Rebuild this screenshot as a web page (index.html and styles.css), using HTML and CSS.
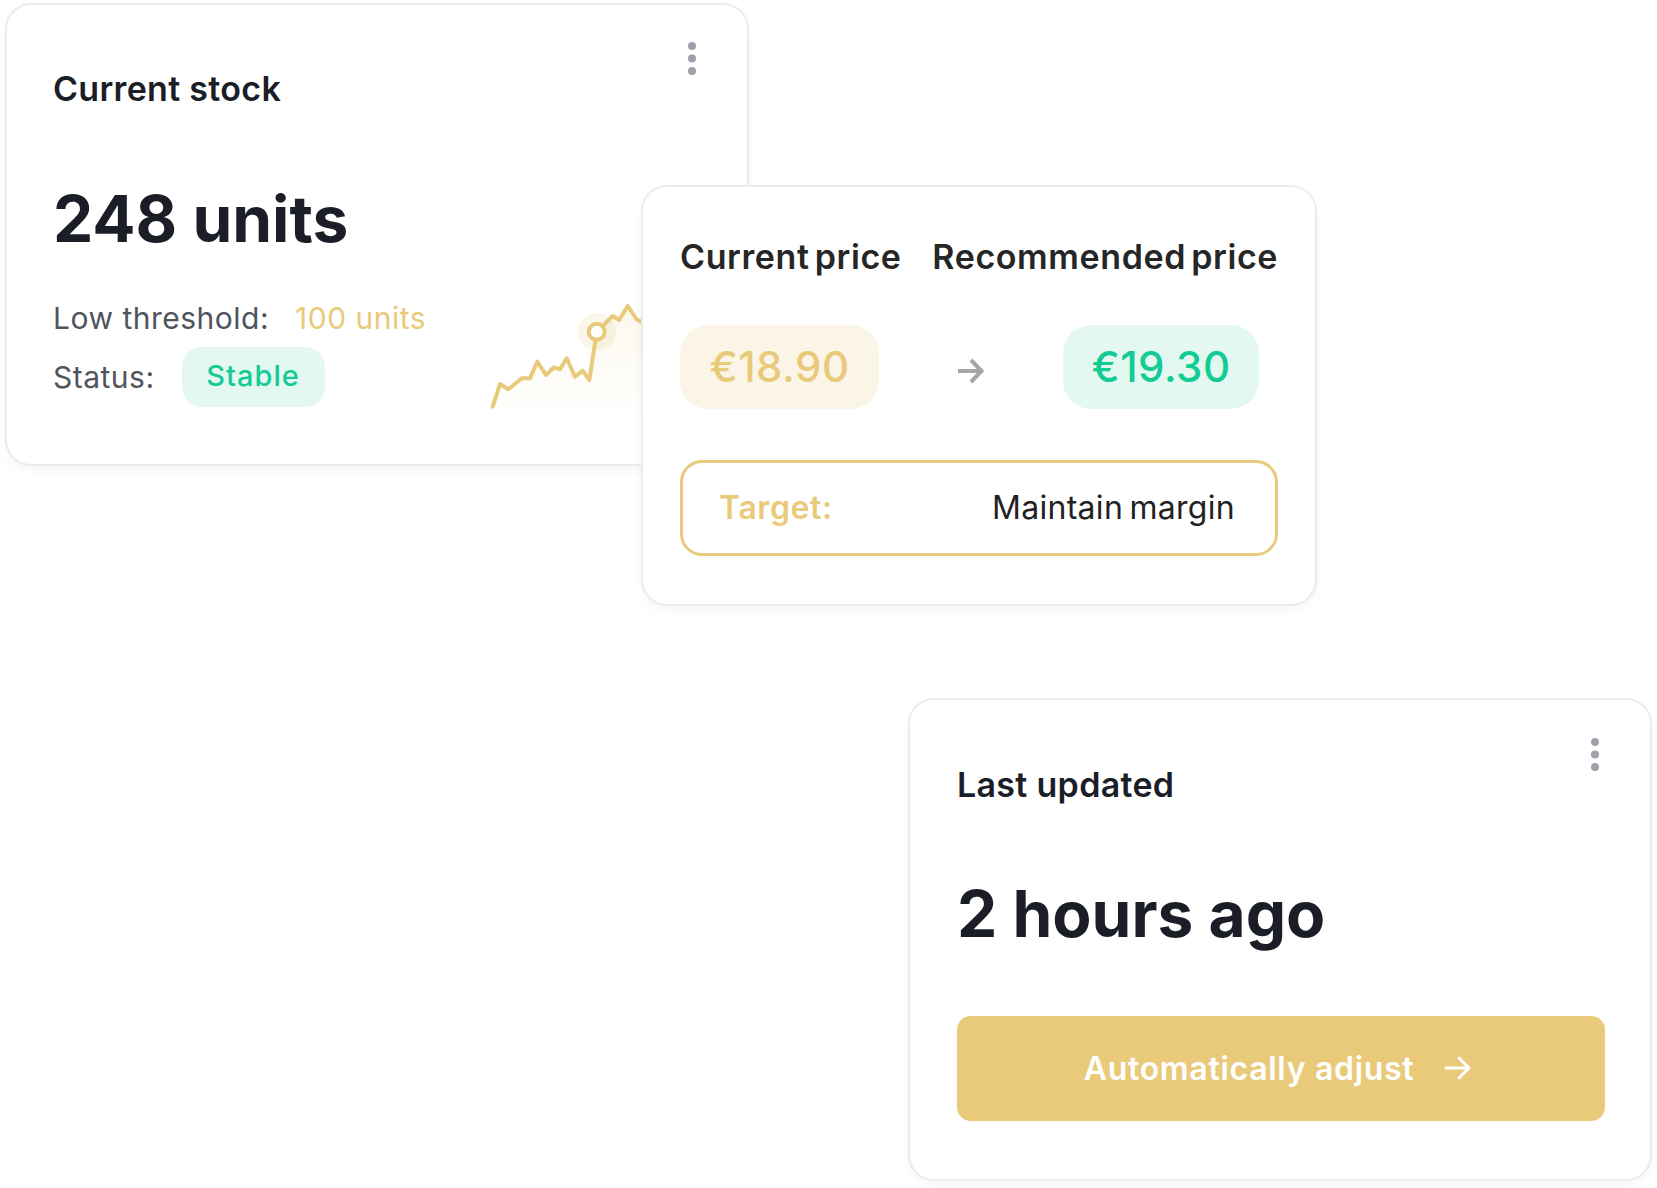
FILE: index.html
```html
<!DOCTYPE html>
<html lang="en">
<head>
<meta charset="utf-8">
<title>Pricing widgets</title>
<link rel="stylesheet" href="styles.css">
</head>
<body>
<main class="canvas">
  <section class="card card-stock">
    <svg class="menu-dots" width="10" height="36" viewBox="0 0 10 36"><circle cx="5" cy="5" r="4"/><circle cx="5" cy="17.5" r="4"/><circle cx="5" cy="30" r="4"/></svg>
    <h2 class="card-title">Current stock</h2>
    <p class="big-value">248 units</p>
    <div class="meta-row threshold-row">
      <span class="meta-label">Low threshold:</span>
      <span class="meta-gold">100 units</span>
    </div>
    <div class="meta-row status-row">
      <span class="meta-label">Status:</span>
      <span class="badge-green">Stable</span>
    </div>
    <svg class="sparkline" width="220" height="135" viewBox="0 0 220 135">
      <defs>
        <linearGradient id="sparkFill" x1="0" y1="0" x2="0" y2="1">
          <stop offset="0" stop-color="#e9ca7b" stop-opacity="0.14"/>
          <stop offset="1" stop-color="#e9ca7b" stop-opacity="0"/>
        </linearGradient>
      </defs>
      <path d="M12.7 116.7 L20 94 L28.3 99.3 L41.7 88.3 L50 88.3 L57.3 71.7 L66 85 L74 77.3 L80 79.3 L86.7 68.3 L95 86.7 L102.7 80.7 L109.3 90 L116.7 41.7 L132.7 26 L139.3 30 L147.7 16 L156.7 29.3 L168 36 L180 24 L200 30 L200 135 L12.7 135 Z" fill="url(#sparkFill)"/>
      <polyline points="12.7,116.7 20,94 28.3,99.3 41.7,88.3 50,88.3 57.3,71.7 66,85 74,77.3 80,79.3 86.7,68.3 95,86.7 102.7,80.7 109.3,90 116.7,41.7 132.7,26 139.3,30 147.7,16 156.7,29.3 168,36 180,24 200,30" fill="none" stroke="#e9ca7b" stroke-width="4" stroke-linejoin="round" stroke-linecap="round"/>
      <circle cx="116.7" cy="41.7" r="19" fill="#e9ca7b" fill-opacity="0.16"/>
      <circle cx="116.7" cy="41.7" r="8" fill="#ffffff" stroke="#e9ca7b" stroke-width="4"/>
    </svg>
  </section>

  <section class="card card-price">
    <div class="price-heads">
      <h3 class="price-head">Current price</h3>
      <h3 class="price-head">Recommended price</h3>
    </div>
    <div class="price-row">
      <span class="pill pill-gold">€18.90</span>
      <svg class="price-arrow" width="28" height="30" viewBox="0 0 28 30"><path d="M2 15 H25 M15 4 L25.5 15 L15 26" fill="none" stroke="#a6a6a6" stroke-width="4" stroke-linejoin="miter"/></svg>
      <span class="pill pill-green">€19.30</span>
    </div>
    <div class="target-box">
      <span class="target-label">Target:</span>
      <span class="target-value">Maintain margin</span>
    </div>
  </section>

  <section class="card card-updated">
    <svg class="menu-dots" width="10" height="36" viewBox="0 0 10 36"><circle cx="5" cy="5" r="4"/><circle cx="5" cy="17.5" r="4"/><circle cx="5" cy="30" r="4"/></svg>
    <h2 class="card-title">Last updated</h2>
    <p class="big-value">2 hours ago</p>
    <button class="adjust-btn" type="button">
      <span>Automatically adjust</span>
      <svg width="28" height="26" viewBox="0 0 28 26"><path d="M2 13 H25 M15 3 L25 13 L15 23" fill="none" stroke="#ffffff" stroke-width="3" stroke-linecap="round" stroke-linejoin="round"/></svg>
    </button>
  </section>
</main>
</body>
</html>
```

FILE: styles.css
```css
* { box-sizing: border-box; }

html, body {
  margin: 0;
  padding: 0;
  background: #ffffff;
}

body {
  font-family: Inter, "Noto Sans", "Liberation Sans", sans-serif;
  color: #1b1e27;
}

.canvas {
  position: relative;
  width: 1657px;
  height: 1188px;
  overflow: hidden;
}

.card {
  position: absolute;
  background: #ffffff;
  border: 2px solid #ececec;
  border-radius: 26px;
  box-shadow: 0 5px 10px rgba(0, 0, 0, 0.035);
  display: flex;
  flex-direction: column;
}

.card-stock {
  left: 5px;
  top: 3px;
  width: 744px;
  height: 463px;
  padding: 64px 46px 0 46px;
  z-index: 1;
}

.card-price {
  left: 641px;
  top: 185px;
  width: 676px;
  height: 421px;
  padding: 50px 37px 0 37px;
  z-index: 2;
}

.card-updated {
  left: 908px;
  top: 698px;
  width: 744px;
  height: 483px;
  padding: 65px 46px 0 47px;
  z-index: 1;
}

.menu-dots {
  position: absolute;
  fill: #9da1a9;
}

.card-stock .menu-dots { left: 680px; top: 36px; }
.card-updated .menu-dots { left: 680px; top: 37px; }

.card-title {
  margin: 0;
  font-size: 34px;
  line-height: 1.2;
  font-weight: 600;
  letter-spacing: 0.3px;
  color: #1b1e27;
}

.big-value {
  margin: 0;
  font-size: 64px;
  line-height: 1.2;
  font-weight: 700;
  letter-spacing: 0;
  color: #1b1e27;
}

.card-stock .big-value { margin-top: 71px; }
.card-updated .big-value { margin-top: 70px; }

.meta-row {
  display: flex;
  align-items: center;
  font-size: 30px;
  line-height: 1.2;
  letter-spacing: 0.5px;
}

.threshold-row {
  margin-top: 42px;
  gap: 26px;
}

.status-row {
  margin-top: 11px;
  gap: 27px;
}

.meta-label {
  color: #50545d;
}

.meta-gold {
  color: #e9ca7b;
}

.badge-green {
  display: inline-flex;
  align-items: center;
  justify-content: center;
  height: 60px;
  width: 143px;
  border-radius: 20px;
  background: #e3f8f1;
  color: #14cb93;
  font-size: 29px;
  font-weight: 500;
  letter-spacing: 1px;
}

.sparkline {
  position: absolute;
  left: 473px;
  top: 285px;
}

.price-heads {
  display: flex;
  justify-content: space-between;
}

.price-head {
  margin: 0;
  font-size: 34px;
  line-height: 1.2;
  font-weight: 600;
  letter-spacing: 0.6px;
  word-spacing: -4px;
  color: #262626;
}

.price-row {
  display: flex;
  align-items: center;
  margin-top: 47px;
  gap: 77px;
}

.pill {
  display: inline-flex;
  align-items: center;
  justify-content: center;
  height: 84px;
  border-radius: 28px;
  font-size: 42px;
  font-weight: 500;
  letter-spacing: 0.5px;
}

.pill-gold {
  width: 199px;
  background: #fbf5e7;
  color: #e9ca7b;
}

.pill-green {
  width: 196px;
  background: #e3f8f1;
  color: #12cc94;
}

.price-arrow {
  margin-top: 8px;
  margin-right: 2px;
}

.target-box {
  margin-top: 51px;
  height: 96px;
  border: 3.5px solid #e9ca7b;
  border-radius: 22px;
  display: flex;
  align-items: center;
  justify-content: space-between;
  padding: 0 40px 0 36px;
  font-size: 32px;
}

.target-label {
  color: #e9ca7b;
  font-weight: 600;
  letter-spacing: 0.6px;
}

.target-value {
  color: #222222;
  font-weight: 400;
  letter-spacing: 0.3px;
  word-spacing: -3px;
}

.adjust-btn {
  margin-top: 63px;
  height: 105px;
  width: 648px;
  border: none;
  border-radius: 14px;
  background: #e9ca7b;
  color: #ffffff;
  font-family: inherit;
  font-size: 32px;
  font-weight: 600;
  letter-spacing: 0.7px;
  display: flex;
  align-items: center;
  justify-content: center;
  gap: 30px;
  padding: 0 6px 0 0;
}
```
